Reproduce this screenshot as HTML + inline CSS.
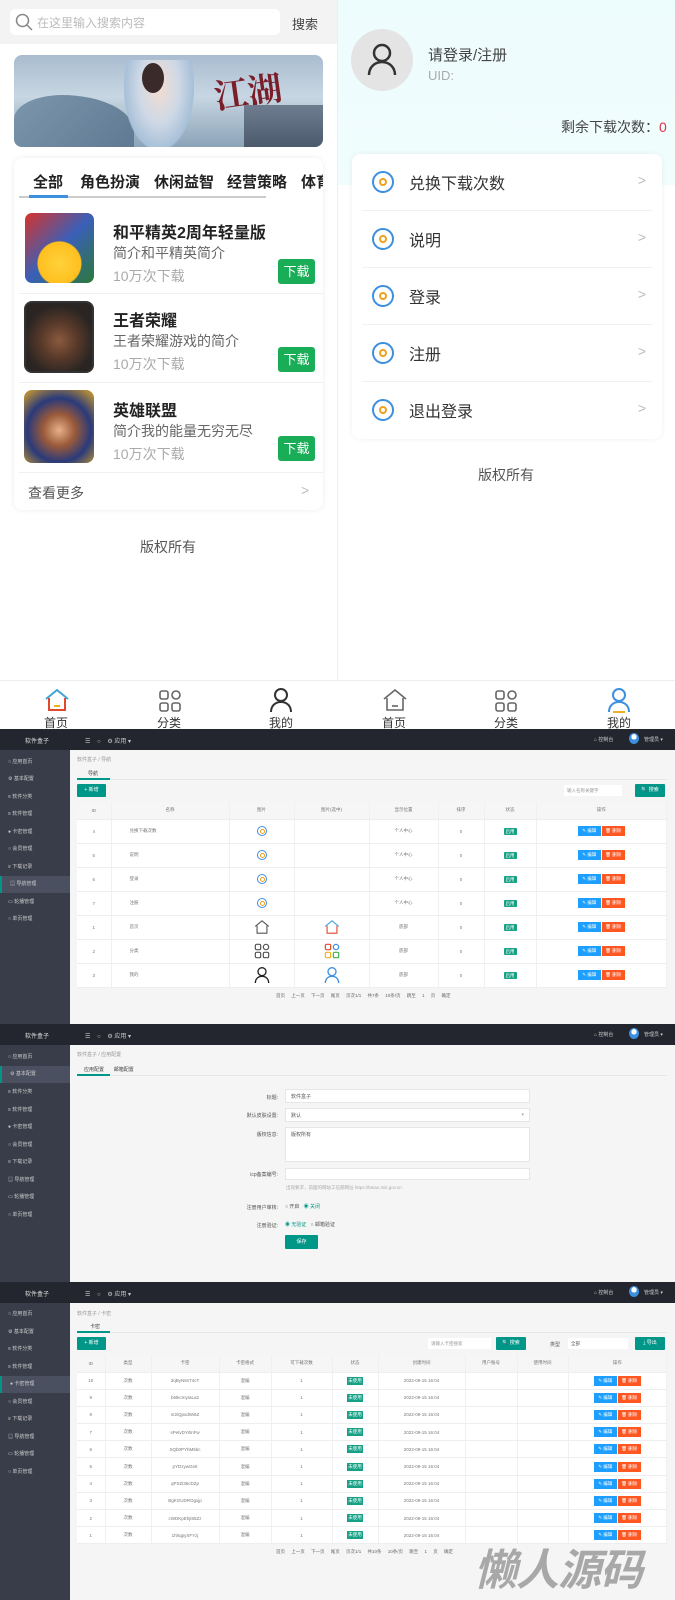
<!DOCTYPE html>
<html><head><meta charset="utf-8">
<style>
*{margin:0;padding:0;box-sizing:border-box}
body{width:675px;height:1600px;position:relative;overflow:hidden;background:#fff;font-family:"Liberation Sans","Noto Sans CJK SC",sans-serif;color:#333}
.a{position:absolute}
.t{white-space:nowrap}
.dl{position:absolute;left:278px;width:37px;height:25px;background:#1aad57;color:#fff;border-radius:3px;font-size:13px;text-align:center;line-height:25px}
.row{position:absolute;left:362px;width:290px;height:57px;border-bottom:1px solid #f0f0f0}
.row .ic{position:absolute;left:10px;top:17px;width:22px;height:22px;border:2px solid #3d8fe0;border-radius:50%}
.row .ic:after{content:"";position:absolute;left:5px;top:5px;width:8px;height:8px;border:2px solid #f0a020;border-radius:50%;box-sizing:border-box}
.row .tx{position:absolute;left:47px;top:16px;font-size:16px;color:#333}
.row .ar{position:absolute;right:6px;top:18px;font-size:14px;color:#bbb}
.hd{position:absolute;left:0;width:675px;height:21px;background:#23262e;color:#ddd;font-size:6px}
.sb{position:absolute;left:0;width:70px;background:#393d49}
.si{position:absolute;left:0;width:70px;height:17px;font-size:5px;color:#ccc;line-height:17px;padding-left:8px}
.si.on{background:#4a5060;border-left:2px solid #009688}
.main{position:absolute;left:70px;width:605px;background:#f5f5f5}
table{border-collapse:collapse;position:absolute;background:#fff;font-size:4.5px;color:#777;table-layout:fixed}
td,th{border-bottom:1px solid #eee;border-right:1px solid #f0f0f0;text-align:center;font-weight:normal;white-space:nowrap;overflow:hidden}
th{background:#f6f6f6;height:17px}
.g{display:inline-block;background:#16a085;color:#fff;width:13px;height:7px;line-height:7px;border-radius:1px}
.g2{display:inline-block;background:#16a085;color:#fff;width:16px;height:8px;line-height:8px}
.be{display:inline-block;background:#1e9fff;color:#fff;width:23px;height:10px;line-height:10px}
.bd{display:inline-block;background:#ff5722;color:#fff;width:23px;height:10px;line-height:10px;margin-left:1px}
.btn{position:absolute;background:#009688;color:#fff;font-size:5px;text-align:center;border-radius:1px}
.ci{display:inline-block;width:10px;height:10px;border:1.5px solid #3d8fe0;border-radius:50%;position:relative;vertical-align:middle}
.ci:after{content:"";position:absolute;left:2px;top:2px;width:3px;height:3px;border:1px solid #f0a020;border-radius:50%}
.lbl{position:absolute;font-size:5px;color:#555;text-align:right;width:80px;left:198px}
.inp{position:absolute;left:285px;width:245px;background:#fff;border:1px solid #e6e6e6;font-size:5px;color:#555;padding:3px 5px}
</style></head><body>

<!-- LEFT APP -->
<div class="a" style="left:0;top:0;width:337px;height:44px;background:#f3f3f3"></div>
<div class="a" style="left:10px;top:9px;width:270px;height:26px;background:#fff;border-radius:5px"></div>
<svg class="a" style="left:15px;top:13px" width="18" height="18" viewBox="0 0 18 18"><circle cx="7.5" cy="7.5" r="6" fill="none" stroke="#888" stroke-width="1.5"/><path d="M12 12l5 5" stroke="#888" stroke-width="1.5"/></svg>
<div class="a t" style="left:37px;top:14px;font-size:12px;color:#bbb">在这里输入搜索内容</div>
<div class="a t" style="left:292px;top:14px;font-size:13px;color:#444">搜索</div>

<div class="a" style="left:14px;top:55px;width:309px;height:92px;border-radius:8px;overflow:hidden;background:linear-gradient(180deg,#a9bcd0 0%,#c7d6e2 45%,#8ba3b8 100%)">
 <div class="a" style="left:0;top:40px;width:120px;height:60px;background:linear-gradient(135deg,#7c96ad,#5d7890);border-radius:40% 60% 0 0"></div>
 <div class="a" style="left:110px;top:5px;width:70px;height:90px;background:radial-gradient(ellipse at 50% 30%,#f3ddd0 0%,#cfd9e6 40%,#a7c0d8 70%,transparent 72%)"></div>
 <div class="a" style="left:128px;top:8px;width:22px;height:30px;border-radius:50%;background:#3a2a2a"></div>
 <div class="a" style="left:200px;top:10px;width:70px;height:55px;font-size:34px;color:#7a1e2a;font-weight:bold;font-family:'Noto Serif CJK SC',serif;transform:rotate(-8deg)">江湖</div>
 <div class="a" style="left:230px;top:50px;width:80px;height:45px;background:linear-gradient(180deg,#6e7e90,#48586a)"></div>
</div>

<div class="a" style="left:14px;top:158px;width:309px;height:352px;background:#fff;border-radius:8px;box-shadow:0 0 6px rgba(0,0,0,.08)"></div>
<div class="a t" style="left:33px;top:171px;font-size:15px;font-weight:bold;color:#222;word-spacing:0">全部</div>
<div class="a t" style="left:80px;top:171px;font-size:15px;font-weight:bold;color:#222">角色扮演</div>
<div class="a t" style="left:154px;top:171px;font-size:15px;font-weight:bold;color:#222">休闲益智</div>
<div class="a t" style="left:227px;top:171px;font-size:15px;font-weight:bold;color:#222">经营策略</div>
<div class="a t" style="left:301px;top:171px;width:22px;overflow:hidden;font-size:15px;font-weight:bold;color:#222">体育</div>
<div class="a" style="left:19px;top:196px;width:247px;height:2px;background:#ccc"></div>
<div class="a" style="left:29px;top:195px;width:39px;height:3px;background:#3d8fe0"></div>

<div class="a" style="left:25px;top:213px;width:69px;height:70px;border-radius:7px;background:radial-gradient(circle at 50% 72%,#ffd23a 0%,#ffbf1f 35%,transparent 37%),linear-gradient(135deg,#d8332b,#3a5fb8 50%,#2c7a3a)"></div>
<div class="a t" style="left:113px;top:219px;font-size:16px;font-weight:bold;color:#222">和平精英2周年轻量版</div>
<div class="a t" style="left:113px;top:243px;font-size:14px;color:#666">简介和平精英简介</div>
<div class="a t" style="left:113px;top:266px;font-size:14px;color:#aaa">10万次下载</div>
<div class="dl" style="top:259px">下载</div>
<div class="a" style="left:19px;top:293px;width:304px;height:1px;background:#f0f0f0"></div>

<div class="a" style="left:24px;top:301px;width:70px;height:72px;border-radius:8px;background:radial-gradient(circle at 50% 55%,#8a5a3e 0%,#5a3a2a 35%,#2a2522 70%);border:2px solid #333"></div>
<div class="a t" style="left:113px;top:307px;font-size:16px;font-weight:bold;color:#222">王者荣耀</div>
<div class="a t" style="left:113px;top:331px;font-size:14px;color:#666">王者荣耀游戏的简介</div>
<div class="a t" style="left:113px;top:354px;font-size:14px;color:#aaa">10万次下载</div>
<div class="dl" style="top:347px">下载</div>
<div class="a" style="left:19px;top:382px;width:304px;height:1px;background:#f0f0f0"></div>

<div class="a" style="left:24px;top:390px;width:70px;height:73px;border-radius:8px;background:radial-gradient(circle at 50% 55%,#e8b08a 0%,#9a5a3a 30%,#2a3a7a 60%,#b08a3a 90%)"></div>
<div class="a t" style="left:113px;top:397px;font-size:16px;font-weight:bold;color:#222">英雄联盟</div>
<div class="a t" style="left:113px;top:421px;font-size:14px;color:#666">简介我的能量无穷无尽</div>
<div class="a t" style="left:113px;top:444px;font-size:14px;color:#aaa">10万次下载</div>
<div class="dl" style="top:436px">下载</div>
<div class="a" style="left:19px;top:472px;width:304px;height:1px;background:#f0f0f0"></div>
<div class="a t" style="left:28px;top:483px;font-size:14px;color:#555">查看更多</div>
<div class="a t" style="left:301px;top:482px;font-size:14px;color:#bbb">&gt;</div>

<div class="a t" style="left:140px;top:537px;font-size:14px;color:#555">版权所有</div>

<!-- RIGHT APP -->
<div class="a" style="left:337px;top:0;width:1px;height:712px;background:#eee"></div>
<div class="a" style="left:338px;top:0;width:337px;height:185px;background:linear-gradient(180deg,#edfcfd,#f1fdfd)"></div>
<div class="a" style="left:351px;top:29px;width:62px;height:62px;border-radius:50%;background:#e4e4e4"></div>
<svg class="a" style="left:366px;top:42px" width="32" height="34" viewBox="0 0 32 34"><circle cx="16" cy="11" r="8" fill="none" stroke="#333" stroke-width="2.5"/><path d="M3 33c0-8 6-13 13-13s13 5 13 13" fill="none" stroke="#333" stroke-width="2.5"/></svg>
<div class="a t" style="left:428px;top:44px;font-size:15px;color:#444">请登录/注册</div>
<div class="a t" style="left:428px;top:68px;font-size:13px;color:#aaa">UID:</div>
<div class="a t" style="left:561px;top:117px;font-size:14px;color:#444">剩余下载次数：<span style="color:#e0304a">0</span></div>

<div class="a" style="left:352px;top:154px;width:310px;height:285px;background:#fff;border-radius:8px;box-shadow:0 0 6px rgba(0,0,0,.06)"></div>
<div class="row" style="top:154px"><div class="ic"></div><div class="tx">兑换下载次数</div><div class="ar">&gt;</div></div>
<div class="row" style="top:211px"><div class="ic"></div><div class="tx">说明</div><div class="ar">&gt;</div></div>
<div class="row" style="top:268px"><div class="ic"></div><div class="tx">登录</div><div class="ar">&gt;</div></div>
<div class="row" style="top:325px"><div class="ic"></div><div class="tx">注册</div><div class="ar">&gt;</div></div>
<div class="row" style="top:382px;border:none"><div class="ic"></div><div class="tx">退出登录</div><div class="ar">&gt;</div></div>
<div class="a t" style="left:478px;top:465px;font-size:14px;color:#555">版权所有</div>

<!-- BOTTOM NAVS -->
<div class="a" style="left:0;top:680px;width:675px;height:49px;background:#fff;border-top:1px solid #eee"></div>
<svg class="a" style="left:44px;top:688px" width="26" height="24" viewBox="0 0 26 24"><path d="M2 11L13 2l11 9" fill="none" stroke="#3fa3d8" stroke-width="2"/><path d="M5 10v12h16V10" fill="none" stroke="#e04a2a" stroke-width="2"/><rect x="10" y="17" width="6" height="2" fill="#f0b020"/></svg>
<svg class="a" style="left:158px;top:689px" width="24" height="24" viewBox="0 0 24 24" fill="none" stroke="#666" stroke-width="1.6"><rect x="2" y="2" width="8" height="8" rx="2"/><rect x="2" y="14" width="8" height="8" rx="2"/><rect x="14" y="14" width="8" height="8" rx="2"/><circle cx="18" cy="6" r="4"/></svg>
<svg class="a" style="left:269px;top:687px" width="24" height="26" viewBox="0 0 24 26" fill="none" stroke="#333" stroke-width="2"><circle cx="12" cy="8" r="6"/><path d="M2 25c0-6 4-10 10-10s10 4 10 10"/></svg>
<svg class="a" style="left:382px;top:688px" width="26" height="24" viewBox="0 0 26 24" fill="none" stroke="#666" stroke-width="1.6"><path d="M2 11L13 2l11 9"/><path d="M5 10v12h16V10"/><path d="M10 18h6"/></svg>
<svg class="a" style="left:494px;top:689px" width="24" height="24" viewBox="0 0 24 24" fill="none" stroke="#666" stroke-width="1.6"><rect x="2" y="2" width="8" height="8" rx="2"/><rect x="2" y="14" width="8" height="8" rx="2"/><rect x="14" y="14" width="8" height="8" rx="2"/><circle cx="18" cy="6" r="4"/></svg>
<svg class="a" style="left:607px;top:687px" width="24" height="26" viewBox="0 0 24 26" fill="none" stroke-width="2"><circle cx="12" cy="8" r="6" stroke="#3d8fe0"/><path d="M2 25c0-6 4-10 10-10s10 4 10 10" stroke="#3d8fe0"/><path d="M6 25h12" stroke="#f0b020"/></svg>
<div class="a t" style="left:44px;top:714px;font-size:12px;color:#333">首页</div>
<div class="a t" style="left:157px;top:714px;font-size:12px;color:#333">分类</div>
<div class="a t" style="left:269px;top:714px;font-size:12px;color:#333">我的</div>
<div class="a t" style="left:382px;top:714px;font-size:12px;color:#333">首页</div>
<div class="a t" style="left:494px;top:714px;font-size:12px;color:#333">分类</div>
<div class="a t" style="left:607px;top:714px;font-size:12px;color:#333">我的</div>

<!-- ADMIN 1 -->
<div class="hd" style="top:729px"></div>
<div class="sb" style="top:750px;height:274px"></div>
<div class="main" style="top:750px;height:274px"></div>
<div class="hd" style="top:1024px"></div>
<div class="sb" style="top:1045px;height:237px"></div>
<div class="main" style="top:1045px;height:237px"></div>
<div class="hd" style="top:1282px"></div>
<div class="sb" style="top:1303px;height:297px"></div>
<div class="main" style="top:1303px;height:297px"></div>

<!-- header contents -->
<div class="a t" style="left:25px;top:736px;font-size:6px;color:#ddd">软件盒子</div>
<div class="a t" style="left:85px;top:736px;font-size:6px;color:#ccc">☰ &nbsp;&nbsp; ○ &nbsp;&nbsp; ⚙ 应用 ▾</div>
<div class="a t" style="left:594px;top:736px;font-size:5px;color:#ccc">⌂ 控制台</div>
<div class="a" style="left:629px;top:733px;width:10px;height:11px;border-radius:50%;background:radial-gradient(circle at 50% 35%,#fff 30%,#3d8fe0 32%)"></div>
<div class="a t" style="left:644px;top:736px;font-size:5px;color:#ccc">管理员 ▾</div>

<div class="a t" style="left:25px;top:1031px;font-size:6px;color:#ddd">软件盒子</div>
<div class="a t" style="left:85px;top:1031px;font-size:6px;color:#ccc">☰ &nbsp;&nbsp; ○ &nbsp;&nbsp; ⚙ 应用 ▾</div>
<div class="a t" style="left:594px;top:1031px;font-size:5px;color:#ccc">⌂ 控制台</div>
<div class="a" style="left:629px;top:1028px;width:10px;height:11px;border-radius:50%;background:radial-gradient(circle at 50% 35%,#fff 30%,#3d8fe0 32%)"></div>
<div class="a t" style="left:644px;top:1031px;font-size:5px;color:#ccc">管理员 ▾</div>

<div class="a t" style="left:25px;top:1289px;font-size:6px;color:#ddd">软件盒子</div>
<div class="a t" style="left:85px;top:1289px;font-size:6px;color:#ccc">☰ &nbsp;&nbsp; ○ &nbsp;&nbsp; ⚙ 应用 ▾</div>
<div class="a t" style="left:594px;top:1289px;font-size:5px;color:#ccc">⌂ 控制台</div>
<div class="a" style="left:629px;top:1286px;width:10px;height:11px;border-radius:50%;background:radial-gradient(circle at 50% 35%,#fff 30%,#3d8fe0 32%)"></div>
<div class="a t" style="left:644px;top:1289px;font-size:5px;color:#ccc">管理员 ▾</div>

<!-- sidebars -->
<div class="si" style="top:754px">○ 应用首页</div>
<div class="si" style="top:771px">⚙ 基本配置</div>
<div class="si" style="top:789px">≡ 软件分类</div>
<div class="si" style="top:806px">≡ 软件管理</div>
<div class="si" style="top:824px">● 卡密管理</div>
<div class="si" style="top:841px">○ 会员管理</div>
<div class="si" style="top:859px">≡ 下载记录</div>
<div class="si on" style="top:876px">▤ 导航管理</div>
<div class="si" style="top:894px">▭ 轮播管理</div>
<div class="si" style="top:911px">○ 单页管理</div>

<div class="si" style="top:1049px">○ 应用首页</div>
<div class="si on" style="top:1066px">⚙ 基本配置</div>
<div class="si" style="top:1084px">≡ 软件分类</div>
<div class="si" style="top:1102px">≡ 软件管理</div>
<div class="si" style="top:1119px">● 卡密管理</div>
<div class="si" style="top:1137px">○ 会员管理</div>
<div class="si" style="top:1154px">≡ 下载记录</div>
<div class="si" style="top:1172px">▤ 导航管理</div>
<div class="si" style="top:1189px">▭ 轮播管理</div>
<div class="si" style="top:1207px">○ 单页管理</div>

<div class="si" style="top:1306px">○ 应用首页</div>
<div class="si" style="top:1324px">⚙ 基本配置</div>
<div class="si" style="top:1341px">≡ 软件分类</div>
<div class="si" style="top:1359px">≡ 软件管理</div>
<div class="si on" style="top:1376px">● 卡密管理</div>
<div class="si" style="top:1394px">○ 会员管理</div>
<div class="si" style="top:1411px">≡ 下载记录</div>
<div class="si" style="top:1429px">▤ 导航管理</div>
<div class="si" style="top:1446px">▭ 轮播管理</div>
<div class="si" style="top:1464px">○ 单页管理</div>

<!-- admin1 content -->
<div class="a t" style="left:77px;top:756px;font-size:5px;color:#999">软件盒子 / 导航</div>
<div class="a t" style="left:88px;top:770px;font-size:5px;color:#444">导航</div>
<div class="a" style="left:77px;top:779px;width:590px;height:1px;background:#e6e6e6"></div>
<div class="a" style="left:77px;top:778px;width:33px;height:2px;background:#009688"></div>
<div class="btn" style="left:77px;top:784px;width:29px;height:13px;line-height:13px">+ 新增</div>
<div class="a t" style="left:564px;top:785px;width:58px;height:11px;background:#fff;font-size:4.5px;color:#999;padding:3px">输入名称关键字</div>
<div class="btn" style="left:635px;top:784px;width:30px;height:13px;line-height:13px">🔍 搜索</div>
<table style="left:77px;top:802px;width:590px">
<colgroup><col style="width:34px"><col style="width:118px"><col style="width:65px"><col style="width:75px"><col style="width:69px"><col style="width:46px"><col style="width:52px"><col></colgroup>
<tr><th>ID</th><th>名称</th><th>图片</th><th>图片(选中)</th><th>显示位置</th><th>排序</th><th>状态</th><th>操作</th></tr>
<tr style="height:24px"><td>4</td><td style="text-align:left;padding-left:18px">兑换下载次数</td><td><span class="ci"></span></td><td></td><td>个人中心</td><td>0</td><td><span class="g">启用</span></td><td><span class="be">✎ 编辑</span><span class="bd">🗑 删除</span></td></tr>
<tr style="height:24px"><td>5</td><td style="text-align:left;padding-left:18px">说明</td><td><span class="ci"></span></td><td></td><td>个人中心</td><td>0</td><td><span class="g">启用</span></td><td><span class="be">✎ 编辑</span><span class="bd">🗑 删除</span></td></tr>
<tr style="height:24px"><td>6</td><td style="text-align:left;padding-left:18px">登录</td><td><span class="ci"></span></td><td></td><td>个人中心</td><td>0</td><td><span class="g">启用</span></td><td><span class="be">✎ 编辑</span><span class="bd">🗑 删除</span></td></tr>
<tr style="height:24px"><td>7</td><td style="text-align:left;padding-left:18px">注册</td><td><span class="ci"></span></td><td></td><td>个人中心</td><td>0</td><td><span class="g">启用</span></td><td><span class="be">✎ 编辑</span><span class="bd">🗑 删除</span></td></tr>
<tr style="height:24px"><td>1</td><td style="text-align:left;padding-left:18px">首页</td><td><svg width="16" height="16" viewBox="0 0 26 24" fill="none" stroke="#555" stroke-width="1.8"><path d="M2 11L13 2l11 9"/><path d="M5 10v12h16V10"/></svg></td><td><svg width="16" height="16" viewBox="0 0 26 24" fill="none" stroke-width="1.8"><path d="M2 11L13 2l11 9" stroke="#3fa3d8"/><path d="M5 10v12h16V10" stroke="#e04a2a"/></svg></td><td>底部</td><td>0</td><td><span class="g">启用</span></td><td><span class="be">✎ 编辑</span><span class="bd">🗑 删除</span></td></tr>
<tr style="height:24px"><td>2</td><td style="text-align:left;padding-left:18px">分类</td><td><svg width="16" height="16" viewBox="0 0 24 24" fill="none" stroke="#555" stroke-width="1.8"><rect x="2" y="2" width="8" height="8" rx="2"/><rect x="2" y="14" width="8" height="8" rx="2"/><rect x="14" y="14" width="8" height="8" rx="2"/><circle cx="18" cy="6" r="4"/></svg></td><td><svg width="16" height="16" viewBox="0 0 24 24" fill="none" stroke-width="1.8"><rect x="2" y="2" width="8" height="8" rx="2" stroke="#e04a2a"/><rect x="2" y="14" width="8" height="8" rx="2" stroke="#f0b020"/><rect x="14" y="14" width="8" height="8" rx="2" stroke="#3fb050"/><circle cx="18" cy="6" r="4" stroke="#3d8fe0"/></svg></td><td>底部</td><td>0</td><td><span class="g">启用</span></td><td><span class="be">✎ 编辑</span><span class="bd">🗑 删除</span></td></tr>
<tr style="height:24px"><td>3</td><td style="text-align:left;padding-left:18px">我的</td><td><svg width="16" height="18" viewBox="0 0 24 26" fill="none" stroke="#222" stroke-width="2"><circle cx="12" cy="8" r="6"/><path d="M2 25c0-6 4-10 10-10s10 4 10 10"/></svg></td><td><svg width="16" height="18" viewBox="0 0 24 26" fill="none" stroke="#3d8fe0" stroke-width="2"><circle cx="12" cy="8" r="6"/><path d="M2 25c0-6 4-10 10-10s10 4 10 10"/></svg></td><td>底部</td><td>0</td><td><span class="g">启用</span></td><td><span class="be">✎ 编辑</span><span class="bd">🗑 删除</span></td></tr>
</table>
<div class="a t" style="left:276px;top:993px;font-size:4.5px;color:#666;word-spacing:5px">首页 上一页 下一页 尾页 页次1/1 共7条 10条/页 跳至 1 页 确定</div>

<!-- admin2 content -->
<div class="a t" style="left:77px;top:1051px;font-size:5px;color:#999">软件盒子 / 应用配置</div>
<div class="a t" style="left:84px;top:1066px;font-size:5px;color:#444">应用配置 &nbsp;&nbsp;&nbsp;&nbsp;&nbsp; 邮箱配置</div>
<div class="a" style="left:77px;top:1075px;width:590px;height:1px;background:#e6e6e6"></div>
<div class="a" style="left:77px;top:1074px;width:33px;height:2px;background:#009688"></div>
<div class="lbl" style="top:1094px">标题:</div><div class="inp" style="top:1089px;height:14px">软件盒子</div>
<div class="lbl" style="top:1112px">默认皮肤设置:</div><div class="inp" style="top:1108px;height:14px">默认<span style="float:right;color:#aaa">▾</span></div>
<div class="lbl" style="top:1131px">版权信息:</div><div class="inp" style="top:1127px;height:35px">版权所有</div>
<div class="lbl" style="top:1171px">icp备案编号:</div><div class="inp" style="top:1168px;height:12px"></div>
<div class="a t" style="left:286px;top:1185px;font-size:4.5px;color:#aaa">出现要求，前面的网站工信部网址 https://beian.miit.gov.cn</div>
<div class="lbl" style="top:1204px">注册用户审核:</div>
<div class="a t" style="left:285px;top:1203px;font-size:5px;color:#555">○ 开启 &nbsp;&nbsp;<span style="color:#009688">◉ 关闭</span></div>
<div class="lbl" style="top:1222px">注册验证:</div>
<div class="a t" style="left:285px;top:1221px;font-size:5px;color:#555"><span style="color:#009688">◉ 无验证</span> &nbsp;&nbsp;○ 邮箱验证</div>
<div class="btn" style="left:285px;top:1235px;width:33px;height:14px;line-height:14px">保存</div>

<!-- admin3 content -->
<div class="a t" style="left:77px;top:1310px;font-size:5px;color:#999">软件盒子 / 卡密</div>
<div class="a t" style="left:90px;top:1323px;font-size:5px;color:#444">卡密</div>
<div class="a" style="left:77px;top:1332px;width:590px;height:1px;background:#e6e6e6"></div>
<div class="a" style="left:77px;top:1331px;width:33px;height:2px;background:#009688"></div>
<div class="btn" style="left:77px;top:1337px;width:29px;height:13px;line-height:13px">+ 新增</div>
<div class="a t" style="left:428px;top:1338px;width:63px;height:11px;background:#fff;font-size:4.5px;color:#999;padding:3px">请输入卡密搜索</div>
<div class="btn" style="left:496px;top:1337px;width:30px;height:13px;line-height:13px">🔍 搜索</div>
<div class="a t" style="left:550px;top:1341px;font-size:5px;color:#555">类型</div>
<div class="a t" style="left:568px;top:1338px;width:60px;height:11px;background:#fff;font-size:4.5px;color:#555;padding:3px">全部</div>
<div class="btn" style="left:635px;top:1337px;width:30px;height:13px;line-height:13px">⤓ 导出</div>
<table style="left:77px;top:1355px;width:590px">
<colgroup><col style="width:28px"><col style="width:46px"><col style="width:68px"><col style="width:52px"><col style="width:61px"><col style="width:46px"><col style="width:87px"><col style="width:52px"><col style="width:51px"><col></colgroup>
<tr><th>ID</th><th>类型</th><th>卡密</th><th>卡密格式</th><th>可下载次数</th><th>状态</th><th>创建时间</th><th>用户账号</th><th>使用时间</th><th>操作</th></tr>
<tr style="height:17.2px"><td>10</td><td>次数</td><td>3qByN6sT4cT</td><td>混编</td><td>1</td><td><span class="g2">未使用</span></td><td>2022-09-15 16:04</td><td></td><td></td><td><span class="be">✎ 编辑</span><span class="bd">🗑 删除</span></td></tr>
<tr style="height:17.2px"><td>9</td><td>次数</td><td>b6tkcmyIaLa2</td><td>混编</td><td>1</td><td><span class="g2">未使用</span></td><td>2022-09-15 16:04</td><td></td><td></td><td><span class="be">✎ 编辑</span><span class="bd">🗑 删除</span></td></tr>
<tr style="height:17.2px"><td>8</td><td>次数</td><td>sr2iQpxdWi6Z</td><td>混编</td><td>1</td><td><span class="g2">未使用</span></td><td>2022-09-15 16:04</td><td></td><td></td><td><span class="be">✎ 编辑</span><span class="bd">🗑 删除</span></td></tr>
<tr style="height:17.2px"><td>7</td><td>次数</td><td>sPetvDYi0nFw</td><td>混编</td><td>1</td><td><span class="g2">未使用</span></td><td>2022-09-15 16:04</td><td></td><td></td><td><span class="be">✎ 编辑</span><span class="bd">🗑 删除</span></td></tr>
<tr style="height:17.2px"><td>6</td><td>次数</td><td>SQb0PYhM6bc</td><td>混编</td><td>1</td><td><span class="g2">未使用</span></td><td>2022-09-15 16:04</td><td></td><td></td><td><span class="be">✎ 编辑</span><span class="bd">🗑 删除</span></td></tr>
<tr style="height:17.2px"><td>5</td><td>次数</td><td>pYDzywGeIt</td><td>混编</td><td>1</td><td><span class="g2">未使用</span></td><td>2022-09-15 16:04</td><td></td><td></td><td><span class="be">✎ 编辑</span><span class="bd">🗑 删除</span></td></tr>
<tr style="height:17.2px"><td>4</td><td>次数</td><td>qPSZi36cDZp</td><td>混编</td><td>1</td><td><span class="g2">未使用</span></td><td>2022-09-15 16:04</td><td></td><td></td><td><span class="be">✎ 编辑</span><span class="bd">🗑 删除</span></td></tr>
<tr style="height:17.2px"><td>3</td><td>次数</td><td>BgKGUDROgxjp</td><td>混编</td><td>1</td><td><span class="g2">未使用</span></td><td>2022-09-15 16:04</td><td></td><td></td><td><span class="be">✎ 编辑</span><span class="bd">🗑 删除</span></td></tr>
<tr style="height:17.2px"><td>2</td><td>次数</td><td>cWDKpEhjt65Zz</td><td>混编</td><td>1</td><td><span class="g2">未使用</span></td><td>2022-09-15 16:04</td><td></td><td></td><td><span class="be">✎ 编辑</span><span class="bd">🗑 删除</span></td></tr>
<tr style="height:17.2px"><td>1</td><td>次数</td><td>1hhqpyXFYzj</td><td>混编</td><td>1</td><td><span class="g2">未使用</span></td><td>2022-09-15 16:04</td><td></td><td></td><td><span class="be">✎ 编辑</span><span class="bd">🗑 删除</span></td></tr>
</table>
<div class="a t" style="left:276px;top:1549px;font-size:4.5px;color:#666;word-spacing:5px">首页 上一页 下一页 尾页 页次1/1 共10条 10条/页 跳至 1 页 确定</div>

<div class="a t" style="left:474px;top:1536px;font-size:43px;font-weight:bold;color:#a8a8a8;letter-spacing:-1px;font-style:italic">懒人源码</div>
</body></html>
